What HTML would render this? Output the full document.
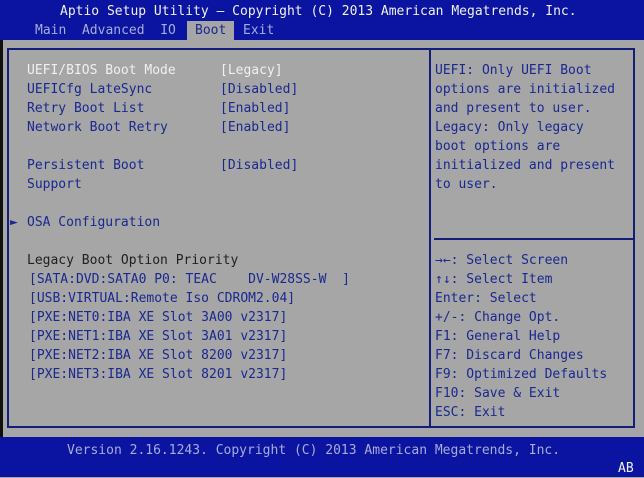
<!DOCTYPE html>
<html><head><style>
html,body{margin:0;padding:0}
body{width:644px;height:477px;position:relative;overflow:hidden;background:#a6a6a6;font-family:"DejaVu Sans Mono","Liberation Mono",monospace;font-size:13px;}
.t{position:absolute;white-space:pre;line-height:19px;height:19px}
#hdr{position:absolute;left:0;top:0;width:644px;height:40px;background:#0a14a0}
#ftr{position:absolute;left:0;top:437px;width:644px;height:40px;background:#0a14a0}
#lb{position:absolute;left:0;top:40px;width:3px;height:397px;background:#101010}
#frame{position:absolute;left:7px;top:48px;width:628px;height:380px;border:2px solid #141e78;box-sizing:border-box}
#div{position:absolute;left:429px;top:48px;width:2px;height:380px;background:#141e78}
#hl{position:absolute;left:434px;top:238px;width:201px;height:2px;background:#141e78}
.w{color:#f0f0f0}.b{color:#1a2890}.k{color:#202020}.g{color:#a8acd8}
</style></head><body>
<div id="hdr"></div>
<div id="lb"></div>
<div class="t w" style="left:60px;top:2px">Aptio Setup Utility – Copyright (C) 2013 American Megatrends, Inc.</div>
<div class="t g" style="left:35px;top:21px">Main  Advanced  IO</div>
<div style="position:absolute;left:187px;top:21px;width:47px;height:19px;background:#a6a6a6"></div>
<div class="t b" style="left:195px;top:21px">Boot</div>
<div class="t g" style="left:243px;top:21px">Exit</div>
<div id="frame"></div><div id="div"></div><div id="hl"></div>
<div class="t w" style="left:27px;top:61px">UEFI/BIOS Boot Mode</div><div class="t w" style="left:220px;top:61px">[Legacy]</div>
<div class="t b" style="left:27px;top:80px">UEFICfg LateSync</div><div class="t b" style="left:220px;top:80px">[Disabled]</div>
<div class="t b" style="left:27px;top:99px">Retry Boot List</div><div class="t b" style="left:220px;top:99px">[Enabled]</div>
<div class="t b" style="left:27px;top:118px">Network Boot Retry</div><div class="t b" style="left:220px;top:118px">[Enabled]</div>
<div class="t b" style="left:27px;top:156px">Persistent Boot</div><div class="t b" style="left:220px;top:156px">[Disabled]</div>
<div class="t b" style="left:27px;top:175px">Support</div>
<div class="t b" style="left:10px;top:213px">►</div><div class="t b" style="left:27px;top:213px">OSA Configuration</div>
<div class="t k" style="left:27px;top:251px">Legacy Boot Option Priority</div>
<div class="t b" style="left:29px;top:270px">[SATA:DVD:SATA0 P0: TEAC    DV-W28SS-W  ]</div>
<div class="t b" style="left:29px;top:289px">[USB:VIRTUAL:Remote Iso CDROM2.04]</div>
<div class="t b" style="left:29px;top:308px">[PXE:NET0:IBA XE Slot 3A00 v2317]</div>
<div class="t b" style="left:29px;top:327px">[PXE:NET1:IBA XE Slot 3A01 v2317]</div>
<div class="t b" style="left:29px;top:346px">[PXE:NET2:IBA XE Slot 8200 v2317]</div>
<div class="t b" style="left:29px;top:365px">[PXE:NET3:IBA XE Slot 8201 v2317]</div>
<div class="t b" style="left:435px;top:61px">UEFI: Only UEFI Boot
options are initialized
and present to user.
Legacy: Only legacy
boot options are
initialized and present
to user.</div>
<div class="t b" style="left:435px;top:251px;height:auto">→←: Select Screen
↑↓: Select Item
Enter: Select
+/-: Change Opt.
F1: General Help
F7: Discard Changes
F9: Optimized Defaults
F10: Save &amp; Exit
ESC: Exit</div>
<div id="ftr"></div>
<div class="t g" style="left:67px;top:441px">Version 2.16.1243. Copyright (C) 2013 American Megatrends, Inc.</div>
<div class="t w" style="left:618px;top:459px">AB</div>
</body></html>
